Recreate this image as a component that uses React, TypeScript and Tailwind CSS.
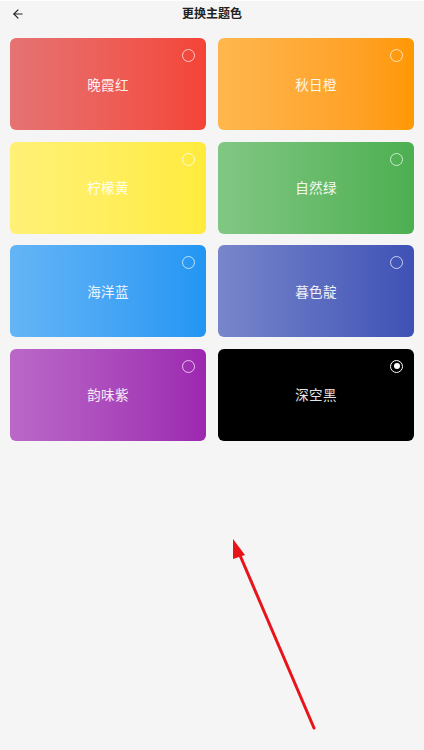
import { ArrowLeft } from 'lucide-react'

const THEMES = [
  { name: '晚霞红', bg: 'bg-gradient-to-r from-[#e57373] to-[#f44336]', ring: 'border-white/70' },
  { name: '秋日橙', bg: 'bg-gradient-to-r from-[#ffb74d] to-[#ff9800]', ring: 'border-white/70' },
  { name: '柠檬黄', bg: 'bg-gradient-to-r from-[#fff176] to-[#ffeb3b]', ring: 'border-white/80' },
  { name: '自然绿', bg: 'bg-gradient-to-r from-[#81c784] to-[#4caf50]', ring: 'border-white/70' },
  { name: '海洋蓝', bg: 'bg-gradient-to-r from-[#64b5f6] to-[#2196f3]', ring: 'border-white/70' },
  { name: '暮色靛', bg: 'bg-gradient-to-r from-[#7986cb] to-[#3f51b5]', ring: 'border-white/70' },
  { name: '韵味紫', bg: 'bg-gradient-to-r from-[#ba68c8] to-[#9c27b0]', ring: 'border-white/70' },
  { name: '深空黑', bg: 'bg-black', ring: 'border-white', selected: true },
]

export default function App() {
  return (
    <div
      className="relative min-h-[750px] w-full bg-[#f5f5f5] overflow-hidden"
      style={{ fontFamily: '"Noto Sans", "Noto Sans CJK SC", sans-serif' }}
    >
      {/* Header */}
      <div className="relative flex items-center justify-center h-[27px] border-t border-white">
        <button className="absolute left-[11px] top-[6px] text-[#222]">
          <ArrowLeft size={14} strokeWidth={2} />
        </button>
        <span className="text-[12px] font-bold text-[#222] leading-none">更换主题色</span>
      </div>

      {/* Theme grid */}
      <div className="grid grid-cols-2 gap-x-[12px] gap-y-[11.5px] px-[10px] pt-[11px]">
        {THEMES.map(t => (
          <div
            key={t.name}
            className={`relative h-[92px] rounded-[6px] flex items-center justify-center ${t.bg}`}
          >
            <span className="text-[13.5px] text-white/90 tracking-wide pt-[2px]">{t.name}</span>
            <span
              className={`absolute top-[11px] right-[11px] w-[13px] h-[13px] rounded-full border-[1.5px] ${t.ring} flex items-center justify-center`}
            >
              {t.selected && <span className="w-[6px] h-[6px] rounded-full bg-white" />}
            </span>
          </div>
        ))}
      </div>

      {/* Annotation arrow */}
      <svg
        className="absolute left-0 top-0 pointer-events-none"
        width="424"
        height="750"
        viewBox="0 0 424 750"
      >
        <line x1="314" y1="728" x2="239" y2="553" stroke="#e8141b" strokeWidth="3" strokeLinecap="round" />
        <polygon points="233,539 245,555 233,559" fill="#e8141b" />
      </svg>
    </div>
  )
}
